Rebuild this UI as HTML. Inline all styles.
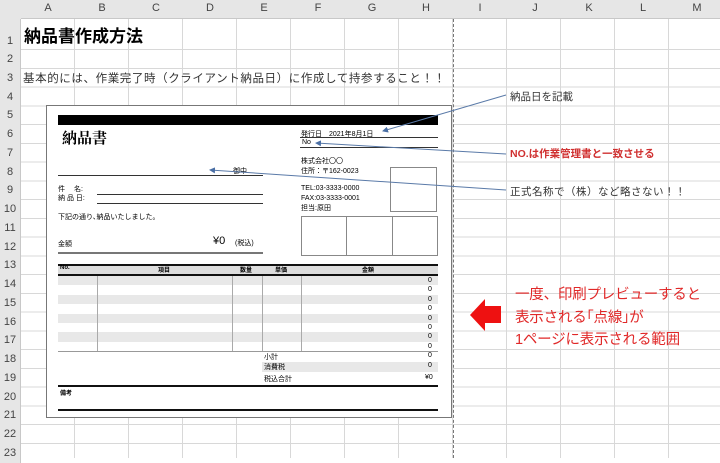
<!DOCTYPE html>
<html><head><meta charset="utf-8"><style>
*{margin:0;padding:0;box-sizing:border-box}
body{width:720px;height:458px;overflow:hidden;background:#fff;position:relative;font-family:"Liberation Sans","Noto Sans CJK JP",sans-serif;color:#000}
.a{position:absolute;white-space:nowrap}
.hdr{position:absolute;left:0;top:0;width:720px;height:19px;background:#e6e6e6;border-bottom:1px solid #c8c8c8}
.ch{position:absolute;top:2px;font-size:11px;color:#444;text-align:center;width:54px}
.rh{position:absolute;left:0;width:21px;background:#e6e6e6;border-right:1px solid #c8c8c8;font-size:11px;color:#444;text-align:center}
.grid{position:absolute;left:21px;top:50px;width:699px;height:408px;
background-image:repeating-linear-gradient(to right,transparent 0,transparent 53px,#d8d8d8 53px,#d8d8d8 54px),repeating-linear-gradient(to bottom,transparent 0,transparent 17.76px,#d8d8d8 17.76px,#d8d8d8 18.76px)}
.s{font-size:7px}
.hl{position:absolute;background:#333}
</style></head><body>
<div class="grid"></div>
<div class="a" style="left:21px;top:19px;width:699px;height:31px;border-bottom:1px solid #d8d8d8;background-image:repeating-linear-gradient(to right,transparent 0,transparent 53px,#d8d8d8 53px,#d8d8d8 54px)"></div>
<div class="hdr"></div>
<div class="a" style="left:0;top:0;width:21px;height:19px;background:#e6e6e6"></div>
<div class="ch" style="left:21px">A</div><div class="ch" style="left:75px">B</div><div class="ch" style="left:129px">C</div><div class="ch" style="left:183px">D</div><div class="ch" style="left:237px">E</div><div class="ch" style="left:291px">F</div><div class="ch" style="left:345px">G</div><div class="ch" style="left:399px">H</div><div class="ch" style="left:453px">I</div><div class="ch" style="left:508px">J</div><div class="ch" style="left:562px">K</div><div class="ch" style="left:616px">L</div><div class="ch" style="left:670px">M</div>
<div class="rh" style="top:19px;height:31px;line-height:44px">1</div>
<div id="rows"></div>
<script>
var r='';for(var i=2;i<=23;i++){var t=50+(i-2)*18.76;r+='<div class="rh" style="top:'+t+'px;height:18.76px;line-height:19px">'+i+'</div>';}
document.getElementById('rows').innerHTML=r;
</script>
<div class="a" style="left:453px;top:19px;height:439px;border-left:1px dashed #777"></div>

<div class="a" style="left:24px;top:22px;font-size:17px;font-weight:bold">納品書作成方法</div>
<div class="a" style="left:23px;top:70px;font-size:11.5px;color:#333;letter-spacing:0.6px">基本的には、作業完了時（クライアント納品日）に作成して持参すること！！</div>

<!-- invoice -->
<div class="a" style="left:46px;top:105px;width:406px;height:313px;background:#fff;border:1px solid #777"></div>
<div class="a" style="left:58px;top:115px;width:380px;height:10px;background:#000"></div>
<div class="a" style="left:62px;top:127px;font-size:15px;font-weight:bold;font-family:'Noto Serif CJK SC',serif">納品書</div>
<div class="a s" style="left:233px;top:166px">御中</div>
<div class="hl" style="left:58px;top:175px;width:205px;height:1px"></div>
<div class="a s" style="left:58px;top:185px;line-height:9px">件　 名:<br>納 品 日:</div>
<div class="hl" style="left:97px;top:194px;width:166px;height:1px"></div>
<div class="hl" style="left:97px;top:203px;width:166px;height:1px"></div>
<div class="a s" style="left:58px;top:212px">下記の通り､納品いたしました｡</div>
<div class="a s" style="left:58px;top:239px">金額</div>
<div class="a" style="left:213px;top:235px;font-size:11px">¥0</div>
<div class="a s" style="left:235px;top:238px">(税込)</div>
<div class="a" style="left:58px;top:252px;width:205px;height:2px;background:#777"></div>

<div class="a s" style="left:301px;top:129px">発行日　2021年8月1日</div>
<div class="hl" style="left:300px;top:137px;width:138px;height:1px"></div>
<div class="a s" style="left:302px;top:139px">No</div>
<div class="hl" style="left:300px;top:147px;width:138px;height:1px"></div>
<div class="a s" style="left:301px;top:157px;line-height:10px">株式会社〇〇<br>住所：〒162-0023</div>
<div class="a s" style="left:301px;top:184px;line-height:10px">TEL:03-3333-0000<br>FAX:03-3333-0001<br>担当:原田</div>
<div class="a" style="left:390px;top:167px;width:47px;height:45px;border:1px solid #888"></div>
<div class="a" style="left:301px;top:216px;width:137px;height:40px;border:1px solid #888"></div>
<div class="a" style="left:346px;top:216px;width:1px;height:40px;background:#888"></div>
<div class="a" style="left:392px;top:216px;width:1px;height:40px;background:#888"></div>

<!-- table -->
<div class="a" style="left:58px;top:264px;width:380px;height:12px;background:#ddd;border-top:2px solid #111;border-bottom:2px solid #111"></div>
<div class="a" style="left:60px;top:265px;font-size:6px;font-weight:bold">No.</div>
<div class="a" style="left:158px;top:265px;font-size:6px;font-weight:bold">項目</div>
<div class="a" style="left:240px;top:265px;font-size:6px;font-weight:bold">数量</div>
<div class="a" style="left:275px;top:265px;font-size:6px;font-weight:bold">単価</div>
<div class="a" style="left:362px;top:265px;font-size:6px;font-weight:bold">金額</div>
<div id="tb"></div>
<script>
var h='';for(var i=0;i<8;i++){var t=276+i*9.4;if(i%2==0)h+='<div class="a" style="left:58px;top:'+t+'px;width:380px;height:9.4px;background:#e8e8e8"></div>';h+='<div class="a" style="left:428px;top:'+(t+1)+'px;font-size:7px;line-height:8px">0</div>';}
document.getElementById('tb').innerHTML=h;
</script>
<div class="a" style="left:97px;top:276px;width:1px;height:75px;background:#aaa"></div>
<div class="a" style="left:232px;top:276px;width:1px;height:75px;background:#aaa"></div>
<div class="a" style="left:262px;top:276px;width:1px;height:75px;background:#aaa"></div>
<div class="a" style="left:301px;top:276px;width:1px;height:75px;background:#aaa"></div>
<div class="a" style="left:58px;top:351px;width:380px;height:1px;background:#999"></div>
<div class="a" style="left:262px;top:362px;width:176px;height:10px;background:#e8e8e8"></div>
<div class="a s" style="left:264px;top:352px">小計</div><div class="a s" style="left:428px;top:352px">0</div>
<div class="a s" style="left:264px;top:362px">消費税</div><div class="a s" style="left:428px;top:362px">0</div>
<div class="a s" style="left:264px;top:374px">税込合計</div><div class="a s" style="left:425px;top:374px">¥0</div>
<div class="hl" style="left:58px;top:385px;width:380px;height:2px;background:#111"></div>
<div class="a" style="left:60px;top:388px;font-size:6px;font-weight:bold">備考</div>
<div class="hl" style="left:58px;top:409px;width:380px;height:2px;background:#111"></div>

<!-- arrows -->
<svg class="a" style="left:0;top:0" width="720" height="458">
<defs><marker id="m" markerWidth="6" markerHeight="6" refX="5" refY="3" orient="auto"><path d="M0,0 L6,3 L0,6 z" fill="#4a6fa5"/></marker></defs>
<g stroke="#5a7aa8" stroke-width="1" fill="none" marker-end="url(#m)">
<line x1="506" y1="95" x2="383" y2="131"/>
<line x1="506" y1="154" x2="316" y2="143"/>
<line x1="506" y1="190" x2="210" y2="170"/>
</g>
<path d="M470,315 L485,299 L485,306 L501,306 L501,323 L485,323 L485,331 Z" fill="#ee1111"/>
</svg>
<div class="a" style="left:510px;top:89px;font-size:10.5px;color:#333">納品日を記載</div>
<div class="a" style="left:510px;top:146px;font-size:10.5px;color:#d03030;font-weight:bold">NO.は作業管理書と一致させる</div>
<div class="a" style="left:510px;top:184px;font-size:10.5px;color:#333;letter-spacing:0.5px">正式名称で（株）など略さない！！</div>
<div class="a" style="left:515px;top:284px;font-size:14.5px;color:#e02828;line-height:22.5px;letter-spacing:-0.2px">一度、印刷プレビューすると<br>表示される｢点線｣が<br>1ページに表示される範囲</div>
</body></html>
